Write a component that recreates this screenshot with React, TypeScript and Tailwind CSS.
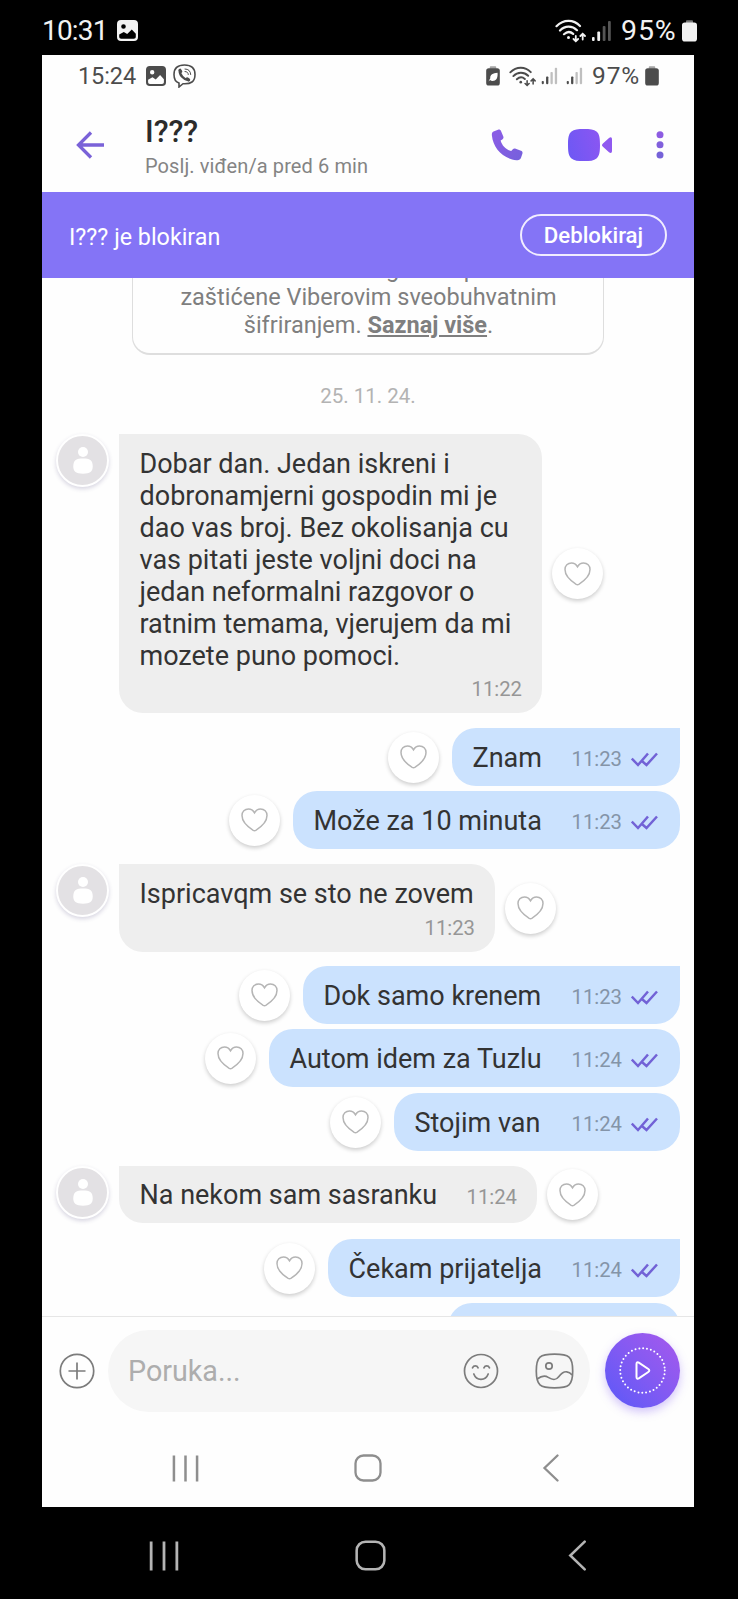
import { clsx } from "clsx";

type Message = {
  text: string;
  time: string;
  own?: boolean;
  first?: boolean;
  stacked?: boolean;
  size: string;
  gap: string;
};

const messages: Message[] = [
  {
    text: "Dobar dan. Jedan iskreni i\ndobronamjerni gospodin mi je\ndao vas broj. Bez okolisanja cu\nvas pitati jeste voljni doci na\njedan neformalni razgovor o\nratnim temama, vjerujem da mi\nmozete puno pomoci.",
    time: "11:22",
    first: true,
    stacked: true,
    size: "w-[423px] h-[279px]",
    gap: "mt-[24px]",
  },
  { text: "Znam", time: "11:23", own: true, first: true, size: "w-[228px] h-[58px]", gap: "mt-[15px]" },
  { text: "Može za 10 minuta", time: "11:23", own: true, size: "w-[387px] h-[58px]", gap: "mt-[5px]" },
  { text: "Ispricavqm se sto ne zovem", time: "11:23", first: true, stacked: true, size: "w-[376px] h-[88px]", gap: "mt-[15px]" },
  { text: "Dok samo krenem", time: "11:23", own: true, first: true, size: "w-[377px] h-[58px]", gap: "mt-[14px]" },
  { text: "Autom idem za Tuzlu", time: "11:24", own: true, size: "w-[411px] h-[58px]", gap: "mt-[5px]" },
  { text: "Stojim van", time: "11:24", own: true, size: "w-[286px] h-[58px]", gap: "mt-[6px]" },
  { text: "Na nekom sam sasranku", time: "11:24", first: true, size: "w-[418px] h-[57px]", gap: "mt-[15px]" },
  { text: "Čekam prijatelja", time: "11:24", own: true, first: true, size: "w-[352px] h-[58px]", gap: "mt-[16px]" },
];

export default function App() {
  return (
    <div className="flex h-[1599px] w-[738px] flex-col overflow-hidden bg-black font-['Roboto',sans-serif]">
      <OuterStatusBar />
      <div className="ml-[42px] flex h-[1452px] w-[652px] shrink-0 flex-col bg-[#fefefe]">
        <StatusBar />
        <Header />
        <BlockedBanner />
        <main className="flex h-[1038px] shrink-0 flex-col overflow-hidden">
          <EncryptionNotice />
          <p className="mt-[27px] text-center text-[20.500px] leading-[28px] text-[#b3b3b3]">25. 11. 24.</p>
          {messages.map((m) => (
            <MessageRow key={m.text} message={m} />
          ))}
          <div className="mt-[6px] mr-[14px] h-[58px] w-[232px] shrink-0 self-end rounded-[24px] bg-[#cbe2fe]" />
        </main>
        <Composer />
        <div className="flex grow items-center pt-[5px] text-[#8e8e8e]">
          <RecentsIcon className="ml-[130px] size-[27px]" />
          <HomeIcon className="ml-[155px] size-[28px]" />
          <BackIcon className="ml-[155px] size-[28px]" />
        </div>
      </div>
      <div className="flex grow items-center pt-[5px] text-[#b4b4b4]">
        <RecentsIcon className="ml-[149px] size-[30px]" />
        <HomeIcon className="ml-[176px] size-[31px]" />
        <BackIcon className="ml-[176px] size-[31px]" />
      </div>
    </div>
  );
}

function OuterStatusBar() {
  return (
    <div className="flex h-[55px] shrink-0 items-center pt-[6px] pl-[42px] text-[#f2f2f2]">
      <span className="w-[75px] text-[28px] leading-[30px] tracking-[-0.8px] whitespace-nowrap">10:31</span>
      <PhotoIcon className="size-[21px]" />
      <WifiIcon className="ml-[417px] h-[24px] w-[31px]" />
      <SignalIcon className="ml-[6px] h-[22px] w-[19px]" />
      <span className="ml-[10px] w-[57px] text-[28.500px] leading-[30px] tracking-[0.9px] whitespace-nowrap">95%</span>
      <BatteryIcon className="ml-[4px] h-[22px] w-[15px]" />
    </div>
  );
}

function StatusBar() {
  return (
    <div className="flex h-[42px] shrink-0 items-center pl-[36px] text-[#4c4c4c]">
      <span className="w-[68px] text-[23.500px] leading-[26px] tracking-[-0.1px] whitespace-nowrap">15:24</span>
      <PhotoIcon className="size-[20px]" />
      <ViberIcon className="ml-[7px] h-[24px] w-[23px]" />
      <BatteryIcon className="ml-[290px] h-[20px] w-[14px]" leaf />
      <WifiIcon className="ml-[9px] h-[21px] w-[27px]" />
      <SignalIcon className="ml-[5px] h-[18px] w-[17px]" />
      <SignalIcon className="ml-[8px] h-[18px] w-[17px]" />
      <span className="ml-[9px] w-[51px] text-[24.500px] leading-[26px] tracking-[0.9px] whitespace-nowrap">97%</span>
      <BatteryIcon className="ml-[2px] h-[20px] w-[14px]" />
    </div>
  );
}

function Header() {
  return (
    <header className="flex h-[95px] shrink-0 items-center">
      <svg className="ml-[34px] size-[28px]" viewBox="0 0 28 28" fill="none" stroke="#7a62d8" strokeWidth="3.300">
        <path d="M15 1.500 2.500 14 15 26.500M2.500 14H28" />
      </svg>
      <div className="ml-[41px] w-[346px] pt-[8px]">
        <h1 className="text-[30.500px] leading-[32px] font-medium text-[#2b2b2b]">I???</h1>
        <p className="pt-[2px] text-[20px] leading-[32px] tracking-[0.1px] text-[#848484]">Poslj. viđen/a pred 6 min</p>
      </div>
      <svg className="size-[32px]" viewBox="0 0 32 32" fill="url(#call)">
        <defs>
          <linearGradient id="call" x1="0" y1="0" x2="1" y2="1">
            <stop offset="0" stopColor="#8d5ce6" />
            <stop offset="1" stopColor="#7560dc" />
          </linearGradient>
        </defs>
        <path d="M2.500 2.500 7 .7c1.400-.5 2.400 0 3 1.300l2.300 5.500c.5 1.200.1 2.200-1 3l-1.700 1.100c1.400 5.200 5.600 9.200 10.600 10.400l1.400-1.500c.9-1 1.900-1.300 3.100-.8l5.300 2.100c1.300.5 1.800 1.500 1.400 2.900l-1.300 3.900c-.7 2-2.300 2.900-4.500 2.600C11.700 29.600 2.200 19.200.9 6.500.7 4.600 1 3.200 2.500 2.500Z" />
      </svg>
      <svg className="ml-[45px] h-[32px] w-[45px]" viewBox="0 0 45 32">
        <defs>
          <linearGradient id="video" x1="0" y1="0.600" x2="1" y2="0.300">
            <stop offset="0" stopColor="#6f58f4" />
            <stop offset="1" stopColor="#8a56f2" />
          </linearGradient>
        </defs>
        <path fill="url(#video)" d="M16 0c6 0 10 .4 12.500 2.600C31.400 5 32 9 32 16s-.6 11-3.500 13.400C26 31.600 22 32 16 32s-10-.4-12.500-2.600C.6 27 0 23 0 16S.6 5 3.500 2.600C6 .4 10 0 16 0Z" />
        <path fill="#9059f0" d="m35.200 14.200 5.800-5.200c1.700-1.300 3-.8 3 1.300v11.600c0 2-1.300 2.600-3 1.300l-5.800-5.200c-1.600-1.300-1.600-2.500 0-3.800Z" />
      </svg>
      <svg className="ml-[43px] h-[28px] w-[8px]" viewBox="0 0 8 28">
        <circle cx="4" cy="3.700" r="3.500" fill="#8d5ce2" />
        <circle cx="4" cy="13.700" r="3.500" fill="#8160dc" />
        <circle cx="4" cy="24" r="3.500" fill="#7662d8" />
      </svg>
    </header>
  );
}

function BlockedBanner() {
  return (
    <div className="flex h-[86px] shrink-0 items-center justify-between bg-[#8474f6] pr-[27px] pl-[27px] text-white">
      <span className="pt-[3px] text-[23.300px] leading-[30px]">I??? je blokiran</span>
      <button className="h-[42px] w-[147px] rounded-full border-2 border-[#f1edff] text-[22.200px] leading-[30px] font-medium">
        Deblokiraj
      </button>
    </div>
  );
}

function EncryptionNotice() {
  return (
    <div className="ml-[90px] flex h-[77px] w-[472px] shrink-0 flex-col justify-end rounded-b-[18px] border border-t-0 border-b-2 border-[#dedede] pb-[14px] pl-px text-center text-[23.500px] leading-[28px] whitespace-pre-line text-[#7f7f7f]">
      <p>
        Poruke u ovome razgovoru posve su{"\n"}zaštićene Viberovim sveobuhvatnim{"\n"}šifriranjem.{" "}
        <span className="font-bold underline decoration-2 underline-offset-2">Saznaj više</span>.
      </p>
    </div>
  );
}

function MessageRow({ message }: { message: Message }) {
  const { text, time, own, first, stacked, size, gap } = message;

  return (
    <div className={clsx("flex shrink-0 items-center", gap, own ? "flex-row-reverse pr-[14px]" : "pl-[14px]")}>
      {!own && <Avatar />}
      <div
        className={clsx(
          "flex shrink-0 text-[27px] leading-[32px] text-[#333333]",
          size,
          own ? "rounded-[24px] bg-[#cbe2fe] pr-[21px] pl-[20.500px]" : "rounded-[24px] rounded-tl-none bg-[#eeeeee] pr-[20px] pl-[20.500px]",
          own && first && "rounded-tr-none",
          stacked ? "flex-col justify-between pt-[14px] pb-[10px]" : "items-center justify-between"
        )}
      >
        <p className={clsx("whitespace-pre", !stacked && "pt-px")}>{text}</p>
        <div className={clsx("flex items-center", stacked ? "self-end" : "pt-[4px]")}>
          <span className={clsx("text-[20.300px] leading-[28px]", own ? "text-[#8494a8]" : "text-[#969696]")}>{time}</span>
          {own && <SeenIcon />}
        </div>
      </div>
      <div
        className={clsx(
          "flex size-[51px] shrink-0 items-center justify-center rounded-full bg-white shadow-[0_2px_4px_rgba(0,0,0,0.2)]",
          own ? "mr-[13.500px]" : "ml-[10px]"
        )}
      >
        <svg className="h-[24px] w-[27px]" viewBox="0 0 27 24" fill="none" stroke="#b5b5b5" strokeWidth="1.500">
          <path d="M13.500 4.800C11.800 1.800 9.600 1 7.500 1 3.700 1 1 3.700 1 7.600c0 6.700 7.300 12.300 11.200 14.700.9.500 1.700.5 2.600 0C18.700 19.900 26 14.300 26 7.600 26 3.700 23.300 1 19.500 1c-2.100 0-4.300.8-6 3.800Z" />
        </svg>
      </div>
    </div>
  );
}

function Avatar() {
  return (
    <div className="mr-[10px] flex size-[53px] shrink-0 items-center justify-center self-start rounded-full border-2 border-white bg-[#e3e1e4] shadow-[0_2px_4px_rgba(60,50,110,0.200)]">
      <svg className="h-[27px] w-[20px]" viewBox="0 0 20 27" fill="#fff">
        <circle cx="10" cy="5" r="5" />
        <path d="M10 11.500c6.500 0 9.700 1.500 9.700 8 0 5-2.700 7.200-9.700 7.200S.3 24.500.3 19.500c0-6.500 3.200-8 9.700-8Z" />
      </svg>
    </div>
  );
}

function SeenIcon() {
  return (
    <svg className="ml-[9px] h-[15px] w-[28px]" viewBox="0 0 28 15" fill="none" stroke="#7262d6" strokeWidth="2.500">
      <path d="M.8 6.500 7 13 17 1.500M11.500 9.500 15.500 13 26 1.500" />
    </svg>
  );
}

function Composer() {
  return (
    <div className="flex h-[108px] shrink-0 items-center border-t border-[#e6e6e6]">
      <svg className="ml-[17px] size-[36px]" viewBox="0 0 36 36" fill="none" stroke="#7c7c7c" strokeWidth="1.700">
        <circle cx="18" cy="18" r="16.700" />
        <path d="M18 9.500v17M9.500 18h17" />
      </svg>
      <div className="ml-[13px] flex h-[82px] w-[482px] items-center rounded-full bg-[#f6f6f6] pl-[20px]">
        <span className="w-[335px] text-[28.700px] leading-[36px] text-[#adadad]">Poruka...</span>
        <svg className="size-[36px]" viewBox="0 0 36 36" fill="none" stroke="#7c7c7c" strokeWidth="1.700" strokeLinecap="round">
          <circle cx="18" cy="18" r="16.500" />
          <path d="M9.500 14.800c1.200-2.600 4.400-2.600 5.600 0M20.900 14.800c1.200-2.600 4.400-2.600 5.600 0M10.800 21c1.300 3.500 4 5.300 7.200 5.300s5.900-1.800 7.200-5.300" />
        </svg>
        <svg className="ml-[36px] h-[36px] w-[39px]" viewBox="0 0 39 36" fill="none" stroke="#7c7c7c" strokeWidth="1.700">
          <path d="M19.500 1.200c7 0 11.500.3 14.500 3 3.200 2.800 3.700 7 3.700 13.800s-.5 11-3.700 13.800c-3 2.700-7.500 3-14.500 3s-11.500-.3-14.500-3C1.800 29 1.300 24.800 1.300 18S1.800 7 5 4.200c3-2.700 7.500-3 14.500-3Z" />
          <circle cx="14" cy="13" r="3.200" />
          <path d="M2.200 26c4.500-3.300 8-3.500 11-1.600 4.500 2.800 7.500 3.400 10.500-.6 2.200-3 5-5.300 8-5 2.500.2 4 1.500 5.500 3.200" />
        </svg>
      </div>
      <div className="ml-[15px] flex size-[75px] items-center justify-center rounded-full bg-linear-to-tr from-[#6659f6] from-15% to-[#9c59ee] to-85% shadow-[0_4px_10px_rgba(130,90,240,0.350)]">
        <svg className="size-[50px]" viewBox="0 0 50 50" fill="none" stroke="#fff" strokeWidth="2">
          <circle cx="24.500" cy="24.500" r="22.300" strokeLinecap="round" strokeDasharray="0 3.892" />
          <path d="M18.500 18v13c0 1.500 1 2.100 2.300 1.400l9.500-6.400c1.300-.9 1.300-2.100 0-3l-9.500-6.400c-1.300-.7-2.300-.1-2.300 1.400Z" />
        </svg>
      </div>
    </div>
  );
}

type IconProps = { className: string };

function RecentsIcon({ className }: IconProps) {
  return (
    <svg className={className} viewBox="0 0 28 28" fill="none" stroke="currentColor" strokeWidth="2.600">
      <path d="M2 .5v27M14 .5v27M26 .5v27" />
    </svg>
  );
}

function HomeIcon({ className }: IconProps) {
  return (
    <svg className={className} viewBox="0 0 28 28" fill="none" stroke="currentColor" strokeWidth="2.300">
      <rect x="1.500" y="1.500" width="25" height="25" rx="8" />
    </svg>
  );
}

function BackIcon({ className }: IconProps) {
  return (
    <svg className={className} viewBox="0 0 28 28" fill="none" stroke="currentColor" strokeWidth="2.300" strokeLinecap="round">
      <path d="M20.500 1.500 7.500 14l13 12.500" />
    </svg>
  );
}

function PhotoIcon({ className }: IconProps) {
  return (
    <svg className={className} viewBox="0 0 21 21" fill="currentColor" fillRule="evenodd">
      <path d="M4 0h13a4 4 0 0 1 4 4v13a4 4 0 0 1-4 4H4a4 4 0 0 1-4-4V4a4 4 0 0 1 4-4ZM6.500 4.200a2.300 2.300 0 1 0 0 4.600 2.300 2.300 0 0 0 0-4.600ZM2.200 14.500v2.300c0 1.300.8 2 2 2h12.600c1.300 0 2-.7 2-2v-3l-4-4.300-4.600 4.600-3.400-2.200Z" />
    </svg>
  );
}

function ViberIcon({ className }: IconProps) {
  return (
    <svg className={className} viewBox="0 0 23 24" fill="none" stroke="currentColor" strokeWidth="1.600" strokeLinecap="round">
      <path d="M11.500 1C5 1 1 3.200 1 10.500c0 4.500 1.500 7.500 5 8.500v4l4-3.300c8 .5 12-2 12-9.200C22 3.200 18 1 11.500 1Z" />
      <path strokeWidth="2.400" d="M6.800 6.300c-.5 4.500 4 9.500 8.800 10" />
      <path strokeWidth="3" d="m7 6.200.8 1.300M14.200 14.800l1.500.9" />
      <path strokeWidth="1" d="M12 5c3.500 0 5.500 2 5.700 5.500M12 7.500c2 0 3.200 1.200 3.300 3" />
    </svg>
  );
}

function WifiIcon({ className }: IconProps) {
  return (
    <svg className={className} viewBox="0 0 31 24" fill="none" stroke="currentColor" strokeWidth="2.200" strokeLinecap="round">
      <path d="M1.500 7.200C8.500.2 18.500.2 25 7M5 11.500c5-5 12.200-5 17-.3M9 15.200c3-2.700 6.500-2.700 9.200-.3" />
      <circle cx="13.500" cy="18.500" r="1.500" fill="currentColor" stroke="none" />
      <path strokeWidth="1.800" d="M20.800 17v5M18.500 20l2.300 2.300 2.300-2.300M27.700 20.500v-5.500M25.400 17l2.300-2.300 2.300 2.300" />
    </svg>
  );
}

function SignalIcon({ className }: IconProps) {
  return (
    <svg className={className} viewBox="0 0 19 22" fill="currentColor">
      <rect x="0" y="17" width="2.600" height="4" rx="1" />
      <rect x="5.300" y="11.500" width="2.800" height="9.500" rx="1" />
      <g opacity="0.350">
        <rect x="10.700" y="6" width="2.800" height="15" rx="1" />
        <rect x="16" y="1" width="2.800" height="20" rx="1" />
      </g>
    </svg>
  );
}

function BatteryIcon({ className, leaf }: IconProps & { leaf?: boolean }) {
  return (
    <svg className={className} viewBox="0 0 15 22" fill="currentColor">
      <path opacity="0.500" d="M4 3V1.500C4 .5 4.500.3 5.300.3h4.400c.8 0 1.300.2 1.300 1.200V3Z" />
      <rect y="2.500" width="15" height="19" rx="2.800" />
      {leaf && <path fill="#fff" d="M12.500 7.500c.5 6-1.500 9-5.500 9-1 0-2-.3-2.700-1L2.500 17l2-3.500c-.5-4 3-5.500 8-6Z" />}
    </svg>
  );
}
